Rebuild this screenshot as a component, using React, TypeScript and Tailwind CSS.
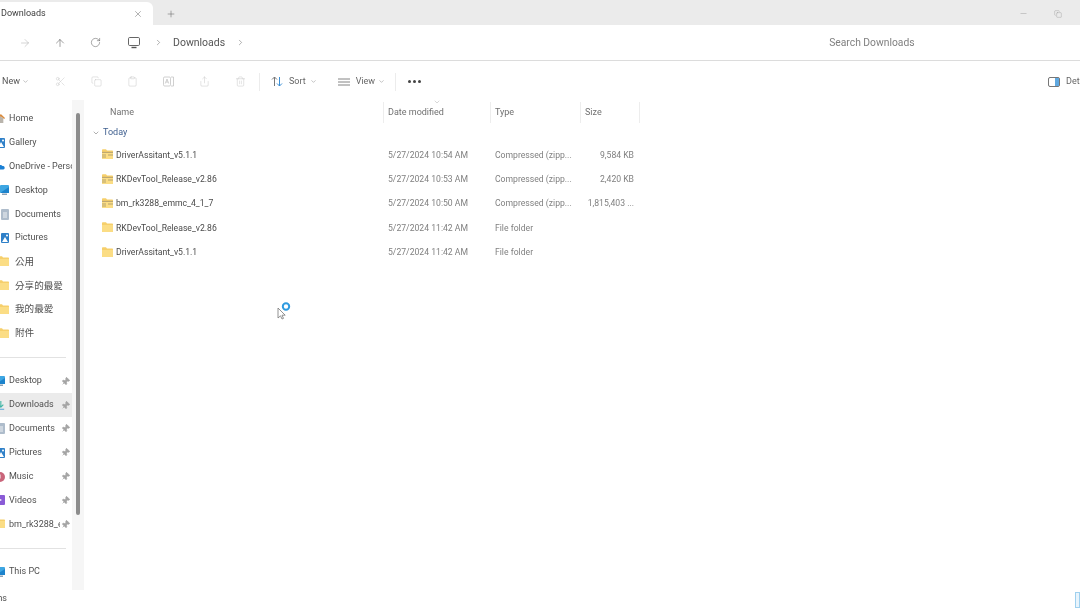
import { ArrowRight, ArrowUp, ChevronDown, ChevronRight, Clipboard, Copy, Minus, Pin, Plus, RotateCw, Scissors, Share, Trash2, X } from "lucide-react";
import type { ReactNode } from "react";

function Folder({ zip = false }: { zip?: boolean }) {
  return (
    <svg width="11" height="10" viewBox="0 0 11 10" className="shrink-0 -translate-y-[1px]">
      <path d="M0 1.2C0 .6.4.2 1 .2h3l1 1.2h5c.6 0 1 .4 1 1V9c0 .6-.4 1-1 1H1c-.6 0-1-.4-1-1z" fill="#f6cf6b" />
      <path d="M0 3h11v6c0 .6-.4 1-1 1H1c-.6 0-1-.4-1-1z" fill="#fbdd85" />
      {zip && <path d="M0 3.4h11M0 6h4M6 6h5M0 8h4" stroke="#9a8a65" strokeWidth=".7" />}
    </svg>
  );
}

// sidebar icons, the left part of most of them is cut by the window edge
function HomeIcon() {
  return (
    <svg width="6" height="11" viewBox="0 0 6 11">
      <path d="M-3 5 1 0l5 5-1 1-4-3-4 4z" fill="#d98a3c" />
      <path d="M-2 5.500 1 3l3 2.500V11H-2z" fill="#b9b4ac" />
    </svg>
  );
}

function Picture({ w, bg = "#2f80c8" }: { w: number; bg?: string }) {
  return (
    <svg width={w} height="10" viewBox={`${8 - w} 0 ${w} 10`}>
      <rect width="8" height="10" rx="1" fill={bg} />
      <path d="M1 9 4 4l3 5z" fill="#fff" />
      <circle cx="6" cy="2.500" r="1" fill="#fff" />
    </svg>
  );
}

function Cloud() {
  return (
    <svg width="6" height="7" viewBox="0 0 6 7">
      <path d="M-2 7a2 2 0 0 1 0-4 3 3 0 0 1 5 0 2 2 0 0 1 1 4z" fill="#1a7fd4" />
    </svg>
  );
}

function Screen({ w }: { w: number }) {
  return (
    <svg width={w} height="10" viewBox={`${9 - w} 0 ${w} 10`}>
      <rect width="9" height="8" rx="1" fill="#3ea6e2" />
      <path d="M0 8 9 2v6z" fill="#1c83cc" />
      <rect x="2" y="8.500" width="5" height="1.500" fill="#8fa3b5" />
    </svg>
  );
}

function Doc({ w }: { w: number }) {
  return (
    <svg width={w} height="11" viewBox={`${8 - w} 0 ${w} 11`}>
      <rect width="8" height="11" rx="1" fill="#aebccb" />
      <path d="M2 4h4M2 6h4M2 8h4" stroke="#fff" strokeWidth=".8" />
    </svg>
  );
}

function DownloadIcon() {
  return (
    <svg width="6" height="11" viewBox="0 0 6 11" fill="none">
      <path d="M1 0v7M-2 4.500 1 7.500 4 4.500" stroke="#3fb5a5" strokeWidth="1.300" />
      <path d="M-3 10h8" stroke="#5aa5d8" strokeWidth="1.300" />
    </svg>
  );
}

function Music() {
  return (
    <svg width="5" height="10" viewBox="0 0 5 10">
      <circle cx="0" cy="5" r="5" fill="#c9657a" />
      <path d="M0 2.500v4" stroke="#fff" strokeWidth="1" />
    </svg>
  );
}

function Video() {
  return (
    <svg width="5" height="10" viewBox="0 0 5 10">
      <rect x="-4" width="9" height="10" rx="1" fill="#8a5bd6" />
      <path d="M-1 3.500 2 5-1 6.500z" fill="#fff" />
    </svg>
  );
}

function Side({ icon, label, pinned, active, indent, cjk }: { icon: ReactNode; label: string; pinned?: boolean; active?: boolean; indent?: boolean; cjk?: boolean }) {
  return (
    <div className={`flex h-[23.85px] items-center ${active ? "bg-[#ebebeb]" : ""}`}>
      <div className={`flex shrink-0 justify-end ${indent ? "w-[9px] mr-[6px]" : "w-[5px] mr-[4px]"}`}>{icon}</div>
      <span className={`overflow-hidden whitespace-nowrap ${pinned ? "w-[51px]" : ""} ${cjk ? "text-[9.6px]" : ""}`}>{label}</span>
      {pinned && <Pin size={9} className="ml-auto mr-[2px] shrink-0 rotate-45 fill-[#a5a5a5] text-[#a5a5a5]" />}
    </div>
  );
}

function Divider() {
  return (
    <div className="flex h-[23.85px] items-center">
      <div className="h-px w-[66px] bg-[#e2e2e2]" />
    </div>
  );
}

function FileRow({ name, date, type, size, zip }: { name: string; date: string; type: string; size?: string; zip?: boolean }) {
  return (
    <div className="flex h-[24.4px] items-center text-[8.65px]">
      <div className="flex w-[302px] items-center gap-[3px] pl-[18px] text-[#4a4a4a]">
        <Folder zip={zip} />
        <span>{name}</span>
      </div>
      <div className="w-[107px] pl-[2px] text-[#808080]">{date}</div>
      <div className="w-[90px] pl-[2px] text-[#808080]">{type}</div>
      <div className="w-[51px] text-right text-[#808080]">{size}</div>
    </div>
  );
}

function Header({ label, w }: { label: string; w: string }) {
  return (
    <div className={`flex h-[21px] items-center border-r border-[#ededed] pl-[4px] text-[#707070] ${w}`}>{label}</div>
  );
}

export default function App() {
  return (
    <div className="flex h-[608px] w-[1080px] flex-col overflow-hidden bg-white text-[9px] text-[#505050] blur-[0.3px] [font-family:Roboto,'Noto_Sans_CJK_TC',sans-serif]">
      {/* tab strip */}
      <div className="flex h-[25px] shrink-0 items-end bg-[#ebebeb]">
        <div className="flex h-[23px] w-[153px] items-center justify-between rounded-tr-[6px] bg-white pl-[1px] pr-[10px] text-[#404040]">
          <span>Downloads</span>
          <X size={10} strokeWidth={1.2} className="text-[#666]" />
        </div>
        <Plus size={10} strokeWidth={1.3} className="mb-[6px] ml-[13px] text-[#666]" />
        <div className="mb-[7px] ml-auto flex items-center gap-[26px] pr-[18px] text-[#888]">
          <Minus size={9} strokeWidth={1} />
          <Copy size={8} strokeWidth={1} />
        </div>
      </div>

      {/* address bar */}
      <div className="flex h-[36px] shrink-0 items-center border-b border-[#dcdcdc]">
        <ArrowRight size={12} strokeWidth={1} className="ml-[19px] text-[#aaa]" />
        <ArrowUp size={12} strokeWidth={1.1} className="ml-[23px] text-[#555]" />
        <RotateCw size={11} strokeWidth={1.1} className="ml-[24px] text-[#555]" />
        <svg width="12" height="12" viewBox="0 0 12 12" className="ml-[27px] text-[#555]" fill="none" stroke="currentColor" strokeWidth=".9">
          <rect x=".5" y=".5" width="11" height="8" rx="1.2" />
          <path d="M3.5 10.5h5" strokeWidth="1.4" />
        </svg>
        <ChevronRight size={9} strokeWidth={1.2} className="ml-[13.500px] text-[#555]" />
        <span className="ml-[10.500px] text-[10.500px] text-[#555]">Downloads</span>
        <ChevronRight size={9} strokeWidth={1.2} className="ml-[11px] text-[#555]" />
        <span className="ml-[584px] text-[10.300px] text-[#808080]">Search Downloads</span>
      </div>

      {/* command bar */}
      <div className="flex h-[39px] shrink-0 items-center pt-[2px] text-[#666]">
        <span className="ml-[2px] text-[#555]">New</span>
        <ChevronDown size={7} className="ml-[2px] text-[#999]" />
        <div className="ml-[26px] flex items-center gap-[25px] text-[#c4c4c4]">
          <Scissors size={11} strokeWidth={1} />
          <Copy size={11} strokeWidth={1} />
          <Clipboard size={11} strokeWidth={1} />
          <svg width="11" height="11" viewBox="0 0 11 11" fill="none" stroke="currentColor" strokeWidth=".8">
            <rect x=".5" y="1" width="7" height="9" rx="1.2" />
            <path d="M8 1h2.5v9H8M2.3 7.5 4 3l1.7 4.5M2.9 6h2.2" />
          </svg>
          <Share size={11} strokeWidth={1} />
          <Trash2 size={11} strokeWidth={1} />
        </div>
        <div className="ml-[13px] h-[18px] w-px bg-[#ececec]" />
        <svg width="12" height="11" viewBox="0 0 12 11" fill="none" strokeWidth="1" className="ml-[11px]">
          <path d="M3.5 10V1M1 3.5 3.500 1 6 3.500" stroke="#777" />
          <path d="M8.500 1v9M6 7.500 8.500 10 11 7.500" stroke="#3a8fd6" />
        </svg>
        <span className="ml-[6px]">Sort</span>
        <ChevronDown size={7} className="ml-[4px] text-[#999]" />
        <svg width="12" height="8" viewBox="0 0 12 8" stroke="#777" strokeWidth=".9" className="ml-[21px]">
          <path d="M0 1h12M0 4h12M0 7h12" />
        </svg>
        <span className="ml-[6px]">View</span>
        <ChevronDown size={7} className="ml-[3px] text-[#999]" />
        <div className="ml-[10px] h-[18px] w-px bg-[#ececec]" />
        <div className="ml-[12px] flex gap-[2.500px]">
          <div className="size-[2.500px] rounded-full bg-[#444]" />
          <div className="size-[2.500px] rounded-full bg-[#444]" />
          <div className="size-[2.500px] rounded-full bg-[#444]" />
        </div>
        <svg width="12" height="10" viewBox="0 0 12 10" fill="none" className="ml-auto">
          <rect x=".5" y=".5" width="11" height="9" rx="1.500" stroke="#666" strokeWidth=".9" />
          <rect x="7" y="1" width="4" height="8" fill="#5fa8e0" />
        </svg>
        <span className="ml-[6px] w-[14px] overflow-hidden whitespace-nowrap">Details</span>
      </div>

      {/* body */}
      <div className="flex min-h-0 flex-1">
        <aside className="w-[72px] shrink-0 overflow-hidden pt-[7px]">
          <Side icon={<HomeIcon />} label="Home" />
          <Side icon={<Picture w={5} />} label="Gallery" />
          <Side icon={<Cloud />} label="OneDrive - Personal" />
          <Side indent icon={<Screen w={9} />} label="Desktop" />
          <Side indent icon={<Doc w={8} />} label="Documents" />
          <Side indent icon={<Picture w={8} />} label="Pictures" />
          <Side indent cjk icon={<Folder />} label="公用" />
          <Side indent cjk icon={<Folder />} label="分享的最愛" />
          <Side indent cjk icon={<Folder />} label="我的最愛" />
          <Side indent cjk icon={<Folder />} label="附件" />
          <Divider />
          <Side pinned icon={<Screen w={5} />} label="Desktop" />
          <Side pinned active icon={<DownloadIcon />} label="Downloads" />
          <Side pinned icon={<Doc w={5} />} label="Documents" />
          <Side pinned icon={<Picture w={5} />} label="Pictures" />
          <Side pinned icon={<Music />} label="Music" />
          <Side pinned icon={<Video />} label="Videos" />
          <Side pinned icon={<Folder />} label="bm_rk3288_emmc_4_1_7" />
          <Divider />
          <Side icon={<Screen w={5} />} label="This PC" />
        </aside>

        <div className="flex w-[12px] shrink-0 justify-center bg-[#f6f6f6] pt-[13px]">
          <div className="h-[402px] w-[4px] rounded-full bg-[#8c8c8c]" />
        </div>

        <main className="relative flex-1 pt-[2px]">
          <div className="flex">
            <Header label="Name" w="w-[300px] pl-[26px]" />
            <Header label="Date modified" w="w-[107px]" />
            <Header label="Type" w="w-[90px]" />
            <Header label="Size" w="w-[59px]" />
          </div>
          <ChevronDown size={8} strokeWidth={1} className="absolute left-[349px] top-[-2px] text-[#888]" />
          <div className="flex h-[20px] items-center pl-[8px] text-[#3f5f8f]">
            <ChevronDown size={8} className="mr-[3px] text-[#888]" />
            Today
          </div>
          <FileRow zip name="DriverAssitant_v5.1.1" date="5/27/2024 10:54 AM" type="Compressed (zipp..." size="9,584 KB" />
          <FileRow zip name="RKDevTool_Release_v2.86" date="5/27/2024 10:53 AM" type="Compressed (zipp..." size="2,420 KB" />
          <FileRow zip name="bm_rk3288_emmc_4_1_7" date="5/27/2024 10:50 AM" type="Compressed (zipp..." size="1,815,403 ..." />
          <FileRow name="RKDevTool_Release_v2.86" date="5/27/2024 11:42 AM" type="File folder" />
          <FileRow name="DriverAssitant_v5.1.1" date="5/27/2024 11:42 AM" type="File folder" />
          {/* busy cursor */}
          <svg width="16" height="18" viewBox="0 0 16 18" fill="none" className="absolute left-[193px] top-[202px]">
            <path d="M1 6v10l2.500-2.200L5 17l1.500-.6L5 13.200h3.200z" fill="#fff" stroke="#777" strokeWidth=".8" />
            <circle cx="9" cy="4.500" r="3.200" stroke="#2f9be0" strokeWidth="2" />
          </svg>
        </main>
      </div>

      {/* status bar */}
      <div className="relative flex h-[18px] shrink-0 items-center">
        <span className="-ml-[17px] w-[24px] text-right">items</span>
        <div className="absolute bottom-0 right-0 h-[16px] w-[5px] border border-[#9fd0ee] bg-[#e8f4fc]" />
      </div>
    </div>
  );
}
